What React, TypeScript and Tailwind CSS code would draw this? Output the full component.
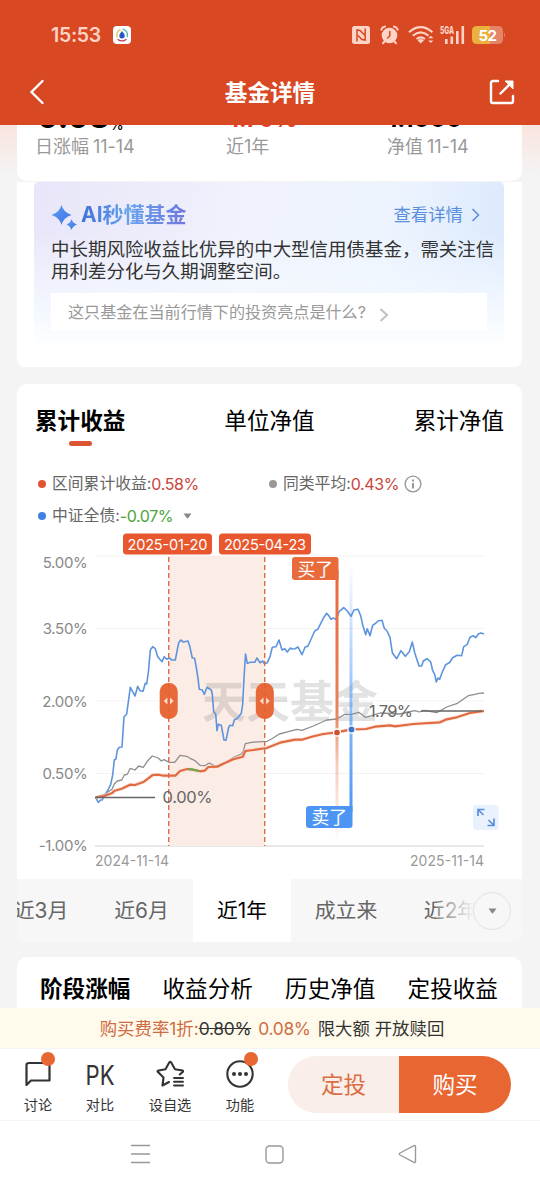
import { ReactNode } from "react";
import clsx from "clsx";

const BLUE_LINE =
  "95.7,797.3 98.3,802.3 100.7,800 102,800 104,796.7 108,790 110.7,784.3 112.7,775 114.3,760 116,759 117.3,750 119.3,747.3 122,747 124,716.7 126.7,714 130.3,687.3 132.7,691.7 135,696 137.7,686.3 140,690.7 143,691.3 145.3,683.3 146.7,684 148.5,671 150.3,650 152.7,646.7 155.3,648.7 157.7,656.7 162,661.7 164.3,656.7 166.7,659.3 169.3,658 172,660 175.3,660 178.7,642.7 180.7,640 183.3,642 188,641 190,647.3 192.3,658 194.7,658.3 196.7,670 198,678.3 199.3,689.3 202.3,690 204.3,694.3 207,687.3 211.3,690 212.3,694.3 213.7,711.7 215.7,714 217,730.7 218.3,724.3 221.3,725.3 224,740 226,740.3 228.7,727.3 230,725.3 232.7,725.7 234.3,720 237.7,718 241.3,713.3 242.7,704 244,678.3 245.5,654 247.3,663.3 250.7,662.3 254.7,662.3 257,658 260,662.7 262.7,661 264.3,663.7 267.3,662.7 270,656.7 272.3,647.3 276,646.7 279,640 282,650 284.7,648.7 287.3,652 290.3,648 292,649 295,648.7 298,647 299.5,650 302,654.7 305,647.3 308,646 314.7,631 317.7,629.3 323.3,618.3 326.7,613.3 329,616 331,619.3 333,618 336,619.3 339.3,611.3 343.7,607.7 347.3,611 351,616.3 354,610 358,609.3 360.7,615.7 362.7,625 365.7,634.7 367.3,628.7 370,635.7 372.7,625.3 376,623 378,621 382,620.3 384.3,628.3 387,631 390,637.3 392.3,652.7 396.7,658.7 401,650.7 405.3,656.3 409.3,651.7 412.3,642 414.7,652.7 419,666 421.7,666 423.3,661 427,658.7 430.7,662 432.7,670.7 434.7,674.3 436.3,682 438,678 439.7,679.3 442.3,672 445.7,664.7 449.3,662.7 452.7,657.7 457,655.3 461.7,655.7 463.7,646.7 467.3,644.3 470,637.3 473.3,635.7 475.7,637.7 478.7,633.7 481,633 484,634";

const GRAY_LINE =
  "95.7,797.3 105,794 112,789.3 114.3,784 117.3,781 121.7,780 124.3,775 127.3,774.3 130.3,768.3 135,770 138.7,766 143.3,767.3 147.7,760.7 152.3,756 158.3,758 161.3,761 164,759.7 169.3,762.3 174.7,762.3 180,755.3 186.7,756.3 190.7,758.7 195,760.7 200,765.3 204.7,765.7 209.3,763 216,766.7 226.7,762 234,757 241.3,754 243.3,751.3 245.3,743.7 251.7,742.3 267.3,741.3 272.7,738.3 279.3,734 288.3,731.7 296.7,729.3 302,730.3 313.3,726 326.7,720 336.7,719 345,714.3 350.7,714.7 358.7,712.3 365.3,717.3 371.7,715.7 380,713 390,713.5 400,714 408,712 415.3,710.7 419.3,712 424,710.3 436.7,712.7 446.7,707 456.7,703.7 468.3,695.7 475,694.3 479,693.3 484,693";

const ORANGE_LINE =
  "95.7,797.3 104,796 111.7,793.3 114.7,790.7 121.7,788.7 130,784.7 135,785 144,781.7 148.3,778.3 152.7,775 158.7,774.7 163.3,775.7 175.3,775.7 180,771 187.3,769 193,769.7 200,771.3 204.7,770.7 208.3,767 217.3,766.7 223.3,763.7 233.3,759.3 242.7,756.7 245.3,751 253.3,750 266.7,748 280,742.7 295,739.7 302,739.7 311.7,736.7 323.3,734 337,732.3 351,729.3 366,729 375,726.7 390,725.3 395,726.3 413.3,724 440,722.3 446.7,719.3 456.7,717.3 470,713 484,711";

const gridRows = [
  { y: 556, label: "5.00%", labelY: 568 },
  { y: 628.5, label: "3.50%", labelY: 633.5 },
  { y: 701, label: "2.00%", labelY: 706.5 },
  { y: 773.5, label: "0.50%", labelY: 778.5 },
  { y: 846, label: "-1.00%", labelY: 851 },
];

const ranges = [
  { name: "近3月", width: "w-[98px]" },
  { name: "近6月", width: "w-[103px]" },
  { name: "近1年", width: "w-[98px]", active: true },
  { name: "成立来", width: "w-[110px]" },
  { name: "近2年", width: "w-[100px]" },
];

const StatusBar = () => (
  <div className="flex h-[60px] items-center justify-between pt-[9px] pl-[51px] pr-[34px]">
    <div className="flex items-center gap-3">
      <span className="w-[50px] whitespace-nowrap pt-[2px] text-[19.5px] font-semibold tracking-[-0.3px] text-[#ffd3c6]">15:53</span>
      <svg width="18" height="18" viewBox="0 0 18 18" fill="none">
        <rect width="18" height="18" rx="4" fill="#fff" />
        <path d="M4.2 11.5A5.8 5.8 0 0 1 7.5 3.7" stroke="#e9c34a" strokeWidth="1.3" />
        <path d="M9.5 3.2A5.8 5.8 0 0 1 14.2 11" stroke="#4fb3a0" strokeWidth="1.3" />
        <path d="M4.6 13.2Q9 16.6 13.4 13.2" stroke="#c0395f" strokeWidth="1.4" />
        <path d="M9 5Q11.7 8 11.7 9.8A2.7 2.7 0 0 1 6.3 9.8Q6.3 8 9 5Z" fill="#2456c4" />
      </svg>
    </div>
    <div className="flex items-center">
      <svg width="18" height="18" viewBox="0 0 18 18" className="mr-[10px]">
        <rect width="18" height="18" rx="2.5" fill="#ffd3c6" />
        <path d="M5 15.5V4L8 4.5L13 9.5M13.2 2.5V14L10 13.5L6 9.5" fill="none" stroke="#d84823" strokeWidth="1.5" />
      </svg>
      <svg width="19" height="20" viewBox="0 0 19 20" className="mr-[9px]" fill="none" stroke="#ffd3c6" strokeLinecap="round">
        <circle cx="9.5" cy="10.5" r="7.8" fill="#ffd3c6" stroke="none" />
        <path d="M1.3 4.6A5 5 0 0 1 5 1.4M17.7 4.6A5 5 0 0 0 14 1.4M4.5 16.5L2.9 18.3M14.5 16.5l1.6 1.8" strokeWidth="2" />
        <path d="M9.8 6.5V11L7.5 13" stroke="#d84823" strokeWidth="1.5" />
      </svg>
      <svg width="26" height="20" viewBox="0 0 26 20" className="mr-[6px]" fill="none" stroke="#ffd3c6" strokeWidth="2.1">
        <path d="M1 7.2Q12.7 -3 24.4 7.2M4.8 10.8Q12.7 4 20.6 10.8M8.5 14Q12.7 10.7 17 14" />
        <path d="M9.5 15.2Q12.7 12.8 16 15.2L12.7 18.5Z" fill="#ffd3c6" stroke="none" />
        <path d="M20.2 13.2L22.8 10.8L25.4 13.2ZM20.2 15.6L22.8 18L25.4 15.6Z" fill="#ffd3c6" stroke="none" />
      </svg>
      <svg width="25" height="20" viewBox="0 0 25 20" className="mr-[7px]">
        <text x="0" y="9" fontSize="10.5" fontWeight="800" fill="#ffd3c6" textLength="14" lengthAdjust="spacingAndGlyphs">5GA</text>
        <path d="M6.3 19V14M11.8 19V11.5M17.3 19V6M22.8 19V1" stroke="#ffd3c6" strokeWidth="2.6" />
      </svg>
      <svg width="34" height="18" viewBox="0 0 34 18">
        <path d="M5 0H26Q31 0 31 5V13Q31 18 26 18H18V0Z" fill="#e58468" />
        <path d="M18 0H5Q0 0 0 5V13Q0 18 5 18H18Z" fill="#eab13f" />
        <path d="M32 6.5Q34 9 32 11.5Z" fill="#e58468" />
        <text x="6.5" y="14.5" fontSize="15" fontWeight="700" fill="#fff" textLength="18.5">52</text>
      </svg>
    </div>
  </div>
);

const Header = () => (
  <header className="h-[125px] bg-[#d84823] text-white">
    <StatusBar />
    <div className="flex h-[64px] items-center justify-between pl-[29px] pr-[25px]">
      <svg width="27" height="26" viewBox="0 0 27 26" fill="none" stroke="#fff" strokeWidth="2.4" strokeLinecap="round">
        <path d="M13.5 2L2.5 13L13.5 24" />
      </svg>
      <h1 className="text-[22.6px] font-bold pr-[5px] pt-px">基金详情</h1>
      <svg width="26" height="26" viewBox="0 0 26 26" fill="none" stroke="#fff" strokeWidth="2.4" strokeLinecap="round" strokeLinejoin="round">
        <path d="M9 2H4Q2 2 2 4V22Q2 24 4 24H22Q24 24 24 22V17" />
        <path d="M11.5 14.5L23 3" />
        <path d="M16.5 2H24V9.5Z" fill="#fff" strokeWidth="1" />
      </svg>
    </div>
  </header>
);

const Summary = () => (
  <section className="ml-[17px] h-[56px] w-[505px] rounded-b-[10px] bg-white pl-[18px]">
    {/* figures are scrolled under the header */}
    <div className="flex h-[8px] items-end overflow-hidden whitespace-nowrap font-bold leading-[30px]">
      <div className="mb-[1px] flex w-[191px] items-end pl-[2px] text-[32px] text-black">
        0.03<span className="-mb-[3px] text-[14px] font-medium leading-[20px]">%</span>
      </div>
      <div className="-mb-[1px] w-[161px] pl-[3px] text-[23px] text-[#e8402a]">1.79%</div>
      <div className="-mb-[1px] text-[24px] text-black">1.1000</div>
    </div>
    <div className="flex text-[18px] leading-[28px] text-[#999]">
      <span className="w-[191px]">日涨幅 <span className="-ml-px tracking-[-0.1px]">11-14</span></span>
      <span className="w-[161px]">近1年</span>
      <span>净值 <span className="-ml-px tracking-[-0.1px]">11-14</span></span>
    </div>
  </section>
);

const AiCard = () => (
  <section className="ml-[17px] mt-px h-[185px] w-[505px] rounded-b-[8px] bg-white px-[17px]">
    <div className="mr-px h-[167px] rounded-[5px] bg-[linear-gradient(180deg,transparent_30%,#f4f9ff_80%,#fff_100%),linear-gradient(100deg,#e8e6f9_0%,#f0f2fc_45%,#edf4fe_72%,#dae8fc_100%)] pl-[17px] pt-[18px]">
      <div className="flex h-[30px] items-center pr-[23px]">
        <svg width="27" height="26" viewBox="0 0 27 26" className="mr-[3px] mt-[3px]">
          <defs>
            <linearGradient id="spark" x1="0" x2="1" y1="0" y2="1">
              <stop offset="0" stopColor="#5ba2f8" />
              <stop offset="1" stopColor="#3f6fe0" />
            </linearGradient>
          </defs>
          <path d="M10.5 1Q12.5 8.5 20.5 11Q12.5 13.5 10.5 21Q8.5 13.5 0.5 11Q8.5 8.5 10.5 1Z" fill="url(#spark)" />
          <path d="M20.5 15Q21.5 19 26 20.5Q21.5 22 20.5 26Q19.5 22 15.5 20.5Q19.5 19 20.5 15Z" fill="url(#spark)" />
        </svg>
        <h2 className="bg-[linear-gradient(90deg,#3f72d6,#66a2ee_45%,#7077dc)] bg-clip-text text-[21px] font-bold text-transparent">
          AI秒懂基金
        </h2>
        <span className="ml-auto text-[17.4px] text-[#5b8fdd]">查看详情</span>
        <svg width="10" height="14" viewBox="0 0 10 14" className="ml-[8px]" fill="none" stroke="#5b8fdd" strokeWidth="1.6">
          <path d="M1.5 1L7.5 7L1.5 13" />
        </svg>
      </div>
      <p className="mt-[9px] w-[450px] text-[18.48px] leading-[21.5px] text-[#333]">
        中长期风险收益比优异的中大型信用债基金，需关注信用利差分化与久期调整空间。
      </p>
      <div className="mt-[11px] flex h-[38px] w-[436px] items-center bg-white pl-[17px] text-[16.1px] text-[#999]">
        <span className="whitespace-nowrap">这只基金在当前行情下的投资亮点是什么?</span>
        <svg width="10" height="14" viewBox="0 0 10 14" className="ml-[13px] mt-[5px]" fill="none" stroke="#c4c4c4" strokeWidth="2.2">
          <path d="M1.5 1L8 7L1.5 13" />
        </svg>
      </div>
    </div>
  </section>
);

const Legend = ({ color, label, value, valueColor, children }: {
  color: string;
  label: string;
  value: string;
  valueColor: string;
  children?: ReactNode;
}) => (
  <div className="flex items-center whitespace-nowrap text-[15.8px] text-[#666]">
    <span className={clsx("mr-[6px] size-[8px] rounded-full", color)} />
    {label}:<span className={clsx("text-[16px] tracking-[-0.4px]", valueColor)}>{value}</span>
    {children}
  </div>
);

const Handle = ({ x }: { x: number }) => (
  <g transform={`translate(${x} 701)`}>
    <rect x="-9" y="-18" width="18" height="36" rx="8.5" fill="#e8683a" />
    <path d="M-1.3 -3.5V3.5L-5 0ZM1.3 -3.5V3.5L5 0Z" fill="#ffd9c9" />
    <path d="M0 -18V18" stroke="#d6592e" strokeDasharray="5 3" opacity="0.5" />
  </g>
);

const Chart = () => (
  <svg width="505" height="347" viewBox="17 532 505 347" className="block">
    <defs>
      <linearGradient id="buy" x1="0" x2="0" y1="0" y2="1">
        <stop offset="0" stopColor="#e8683a" />
        <stop offset="0.5" stopColor="#e78258" />
        <stop offset="0.7" stopColor="#e8683a" stopOpacity="0.35" />
        <stop offset="1" stopColor="#e8683a" stopOpacity="0" />
      </linearGradient>
      <linearGradient id="sell" x1="0" x2="0" y1="0" y2="1">
        <stop offset="0" stopColor="#4c95f5" stopOpacity="0" />
        <stop offset="0.5" stopColor="#4c95f5" stopOpacity="0.55" />
        <stop offset="1" stopColor="#4c95f5" />
      </linearGradient>
    </defs>

    {gridRows.map((row) => (
      <g key={row.label}>
        <path d={`M95 ${row.y}H484`} stroke={row.y === 846 ? "#e8e8e8" : "#f3f3f3"} strokeWidth={row.y === 846 ? 2 : 1} />
        <text x="87.5" y={row.labelY} textAnchor="end" fontSize="15" letterSpacing="-0.3" fill="#888">{row.label}</text>
      </g>
    ))}
    <text x="95" y="866" fontSize="14" fill="#999" textLength="74">2024-11-14</text>
    <text x="410" y="866" fontSize="14" fill="#999" textLength="74">2025-11-14</text>

    {/* selected interval */}
    <rect x="168.5" y="556" width="96.5" height="290" fill="#fcece6" />
    <text x="202" y="718" fontSize="44" fontWeight="700" fill="#000" opacity="0.11">天天基金</text>

    <polyline points={GRAY_LINE} fill="none" stroke="#8e8e8e" strokeWidth="1.3" strokeLinejoin="round" />
    <polyline points={BLUE_LINE} fill="none" stroke="#5e94dd" strokeWidth="1.6" strokeLinejoin="round" />
    <polyline points={ORANGE_LINE} fill="none" stroke="#fbdccd" strokeWidth="4" strokeLinejoin="round" opacity="0.6" />
    <polyline points={ORANGE_LINE} fill="none" stroke="#e06a42" strokeWidth="2.2" strokeLinejoin="round" />
    <path d="M188 769L193 769.7L199 771" fill="none" stroke="#71a84d" strokeWidth="2.2" />

    <path d="M168.7 557V846M264.7 557V846" stroke="#dd6d4a" strokeWidth="1.4" strokeDasharray="5 3" />
    <Handle x={168.7} />
    <Handle x={264.8} />

    <path d="M95 797.5H155M421 711H482" stroke="#666" strokeWidth="1.6" />
    <text x="162.5" y="803" fontSize="16.5" fill="#666" textLength="50">0.00%</text>
    <text x="369" y="716.5" fontSize="16.5" fill="#666" textLength="44">1.79%</text>

    <rect x="123" y="533.5" width="89" height="21" rx="3.5" fill="#e8572d" />
    <text x="127.5" y="549.5" fontSize="14.6" fill="#fff" textLength="80">2025-01-20</text>
    <rect x="219" y="533.5" width="92" height="21" rx="3.5" fill="#e8572d" />
    <text x="224" y="549.5" fontSize="14.6" fill="#fff" textLength="82">2025-04-23</text>

    {/* buy and sell markers */}
    <rect x="335.5" y="570" width="3" height="275" fill="url(#buy)" />
    <path d="M295 557H336Q338.5 557 338.5 560V580H295Q292 580 292 577V560Q292 557 295 557Z" fill="#e96b3c" />
    <text x="297.5" y="575.5" fontSize="17.8" fill="#fff">买了</text>
    <rect x="349.5" y="562" width="3" height="250" fill="url(#sell)" />
    <path d="M309 806H352.5V825Q352.5 828 349.5 828H309Q306 828 306 825V809Q306 806 309 806Z" fill="#4c95f5" />
    <text x="311.5" y="824" fontSize="17.8" fill="#fff">卖了</text>
    <circle cx="337" cy="732.5" r="3.5" fill="#c9532e" stroke="#fff" strokeWidth="1.3" />
    <circle cx="351.5" cy="729.5" r="3.6" fill="#3c76cc" stroke="#fff" strokeWidth="1.3" />

    <rect x="473" y="805" width="25.5" height="25" rx="3" fill="#e9f1fd" />
    <path d="M478 816V809.5H484.5M478.5 810L483.5 815M494 818.5V825.5H487.5M493.5 825L488.5 820" fill="none" stroke="#5b8fdd" strokeWidth="1.7" />
  </svg>
);

const Caret = () => (
  <svg width="9" height="6" viewBox="0 0 9 6" fill="#888">
    <path d="M0.5 0.5H8.5L5.2 5Q4.5 5.8 3.8 5Z" />
  </svg>
);

const Performance = () => (
  <section className="ml-[17px] mt-[17px] h-[558px] w-[505px] overflow-hidden rounded-[10px] bg-white">
    <div className="flex h-[77px] justify-between px-[18px] pt-[20px] text-[22.6px] leading-[34px] text-black">
      <div className="flex flex-col items-center font-bold">
        累计收益
        <span className="mt-[3px] h-[4.5px] w-[23px] rounded-full bg-[#dc5634]" />
      </div>
      <div>单位净值</div>
      <div>累计净值</div>
    </div>
    <div className="flex h-[71px] flex-col pl-[21px] pt-[7px]">
      <div className="flex h-[33px] items-center">
        <div className="w-[231px]">
          <Legend color="bg-[#e0552f]" label="区间累计收益" value="0.58%" valueColor="text-[#c9453c]" />
        </div>
        <Legend color="bg-[#999]" label="同类平均" value="0.43%" valueColor="text-[#c9453c]">
          <svg width="18" height="18" viewBox="0 0 18 18" className="ml-[5px]" fill="none" stroke="#999" strokeWidth="1.4">
            <circle cx="9" cy="9" r="7.9" />
            <path d="M9 8V13.5M9 4.5V6.5" strokeWidth="2" />
          </svg>
        </Legend>
      </div>
      <div className="flex h-[33px] items-center">
        <Legend color="bg-[#4080e0]" label="中证全债" value="-0.07%" valueColor="text-[#4ca53c]">
          <span className="ml-[10px]"><Caret /></span>
        </Legend>
      </div>
    </div>
    <Chart />
    <div className="relative flex h-[63px] bg-[#f7f7f7] text-[20.8px] text-[#666]">
      <div className="-ml-[25px] flex">
        {ranges.map((range) => (
          <div
            key={range.name}
            className={clsx(
              "flex shrink-0 items-center justify-center pt-px",
              range.width,
              range.active && "bg-white text-black"
            )}
          >
            {range.name}
          </div>
        ))}
      </div>
      <div className="absolute right-0 top-0 flex h-full w-[86px] items-center justify-end bg-linear-to-r from-[#f7f7f7]/20 to-[#f7f7f7] to-45% pr-[11px]">
        <button className="flex size-[38px] items-center justify-center rounded-full border border-[#e2e2e2] bg-[#f7f7f7]">
          <Caret />
        </button>
      </div>
    </div>
  </section>
);

const Stages = () => (
  <section className="ml-[17px] mt-[15px] flex h-[51px] w-[505px] justify-between rounded-t-[10px] bg-white pl-[23px] pr-[24px] pt-[15px] text-[22.6px] leading-[34px] text-black">
    <span className="font-bold">阶段涨幅</span>
    <span>收益分析</span>
    <span>历史净值</span>
    <span>定投收益</span>
  </section>
);

const Action = ({ label, badge, children }: { label: string; badge?: boolean; children: ReactNode }) => (
  <div className="flex w-[48px] flex-col items-center">
    <div className="relative flex h-[32px] items-center justify-center">
      {children}
      {badge && <span className="absolute -right-[4px] -top-[6px] size-[14px] rounded-full bg-[#e86632]" />}
    </div>
    <span className="mt-[5px] whitespace-nowrap text-[14.2px] leading-[20px] text-[#333]">{label}</span>
  </div>
);

const ActionBar = () => (
  <div className="flex h-[73px] items-start border-b border-[#f4f4f4] border-t bg-white">
    <div className="flex pl-[14px] pt-[9px]">
      <Action label="讨论" badge>
        <svg width="26" height="28" viewBox="0 0 26 28" fill="none" stroke="#333" strokeWidth="2.2" strokeLinejoin="round">
          <path d="M4 3H22Q24.5 3 24.5 5V20.5H6L1.5 25V5Q1.5 3 4 3Z" />
        </svg>
      </Action>
      <div className="ml-[14px]">
        <Action label="对比">
          <svg width="30" height="28" viewBox="0 0 30 28">
            <text x="0.5" y="25" fontSize="26.5" fill="#333" textLength="29" lengthAdjust="spacingAndGlyphs">PK</text>
          </svg>
        </Action>
      </div>
      <div className="ml-[22px]">
        <Action label="设自选">
          <svg width="28" height="28" viewBox="0 0 28 28" fill="none" stroke="#333" strokeWidth="2.1" strokeLinejoin="round" strokeLinecap="round">
            <path d="M13 22L6.5 25.5L7.5 17.5L1.5 11.5Q1.5 10.5 2.5 10.5L9.5 9.2L13.2 2.5Q14.2 1 15.2 2.5L19 9.2L26.5 10.5Q27.5 11 26.7 12L23.8 14.5" />
            <path d="M18 18H27M18 21.7H27M18 25.5H27" strokeWidth="1.9" />
          </svg>
        </Action>
      </div>
      <div className="ml-[22px]">
        <Action label="功能" badge>
          <svg width="28" height="28" viewBox="0 0 28 28" fill="none" stroke="#333" strokeWidth="2.1">
            <circle cx="14" cy="14" r="12.7" />
            <path d="M8 14H8.01M14 14H14.01M20 14H20.01" strokeWidth="4" strokeLinecap="round" />
          </svg>
        </Action>
      </div>
    </div>
    <div className="ml-[24px] mt-[7px] flex h-[57px] w-[223px] overflow-hidden rounded-full text-[22.6px]">
      <button className="w-[111px] bg-[#f9eee9] text-[#dc6d43]">定投</button>
      <button className="flex-1 bg-[#e86632] text-white">购买</button>
    </div>
  </div>
);

const SystemNav = () => (
  <nav className="flex h-[66px] items-center bg-white pl-[131px]">
    <svg width="19" height="20" viewBox="0 0 19 20" stroke="#999" strokeWidth="1.5">
      <path d="M0 1.5H19M0 10H19M0 18.5H19" />
    </svg>
    <svg width="19" height="19" viewBox="0 0 19 19" className="ml-[115px]" fill="none" stroke="#999" strokeWidth="1.4">
      <rect x="1" y="1" width="17" height="17" rx="3.5" />
    </svg>
    <svg width="19" height="20" viewBox="0 0 19 20" className="ml-[114px]" fill="none" stroke="#999" strokeWidth="1.4" strokeLinejoin="round">
      <path d="M16 1.7Q17.5 1 17.5 2.7V17.3Q17.5 19 16 18.3L2 11Q0.5 10 2 9Z" />
    </svg>
  </nav>
);

const App = () => {
  return (
    <div className="h-[1187px] w-[540px] overflow-hidden bg-[#f4f4f4] font-['Inter','Noto_Sans_CJK_SC',sans-serif]">
      <Header />
      <main className="h-[883px] bg-[linear-gradient(180deg,#f9e4de_0px,#f4f4f4_50px)]">
        <Summary />
        <AiCard />
        <Performance />
        <Stages />
      </main>
      <div className="flex h-[40px] items-center justify-center gap-[7px] whitespace-nowrap bg-[#fffbec] pl-[4px] pt-[2px] text-[17.4px] text-[#cf6b43]">
        <span>购买费率1折:<s className="tracking-[-0.3px] text-[#333]">0.80%</s></span>
        <span className="tracking-[-0.3px]">0.08%</span>
        <span className="text-[#333]">限大额 开放赎回</span>
      </div>
      <ActionBar />
      <SystemNav />
    </div>
  );
};

export default App;
